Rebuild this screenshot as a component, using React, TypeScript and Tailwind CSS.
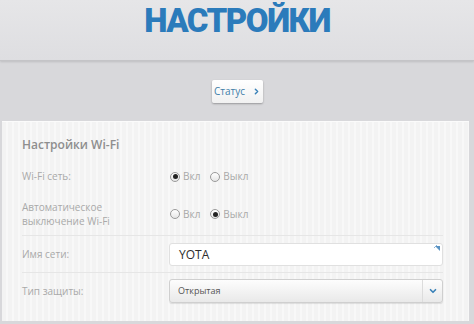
import { ChevronDown, ChevronRight } from "lucide-react";

function Radio({ checked, label }: { checked?: boolean; label: string }) {
  return (
    <label className="flex items-center gap-[3px]">
      <span className="flex h-[10px] w-[10px] items-center justify-center rounded-full border border-[#9a9a9a] bg-[linear-gradient(#ffffff,#e6e6e6)]">
        {checked ? <span className="h-[5px] w-[5px] rounded-full bg-[#222]" /> : null}
      </span>
      <span className="text-[10px] text-[#a8a8a8]">{label}</span>
    </label>
  );
}

export default function App() {
  return (
    <div
      className="h-[324px] w-[474px] overflow-hidden bg-[#d8d8db]"
      style={{ fontFamily: '"Open Sans", "Liberation Sans", sans-serif' }}
    >
      {/* header */}
      <header className="flex h-[61px] justify-center border-b border-[#c4c4c7] bg-[linear-gradient(#e6e6e8,#dedee1)] shadow-[0_1px_2px_rgba(0,0,0,0.12)]">
        <h1
          className="mt-[4px] text-[33px] font-black leading-[34px] tracking-[-1.5px] text-[#2b7bbb]"
          style={{ fontFamily: 'Roboto, "Liberation Sans", sans-serif' }}
        >
          НАСТРОЙКИ
        </h1>
      </header>

      {/* nav */}
      <div className="flex h-[60px] items-center justify-center pl-[1px]">
        <button
          type="button"
          className="mt-[1px] flex h-[23px] w-[51px] items-center justify-center gap-[7px] rounded-[2px] bg-[linear-gradient(#ffffff,#f1f1f1)] text-[10px] text-[#3f7ea8] shadow-[0_1px_2px_rgba(0,0,0,0.3)]"
        >
          Статус
          <ChevronRight className="h-[9px] w-[9px] text-[#3a82b8]" strokeWidth={4} />
        </button>
      </div>

      {/* wifi panel */}
      <section className="ml-[2px] h-[200px] w-[467px] border-t border-[#fbfbfb] bg-[repeating-linear-gradient(90deg,#f3f3f3_0px,#f3f3f3_4px,#f8f8f8_4px,#f8f8f8_6px)] px-[20px] pt-[15px]">
        <h2 className="text-[12px] font-semibold leading-[16px] text-[#8e8e8e]">Настройки Wi-Fi</h2>

        <div className="mt-[16px] flex items-center">
          <span className="w-[148px] text-[10px] text-[#a9a9a9]">Wi-Fi сеть:</span>
          <div className="flex gap-[10px]">
            <Radio checked label="Вкл" />
            <Radio label="Выкл" />
          </div>
        </div>

        <div className="mt-[16px] flex items-center">
          <span className="w-[148px] text-[10px] leading-[14px] text-[#a9a9a9]">
            Автоматическое
            <br />
            выключение Wi-Fi
          </span>
          <div className="flex gap-[10px]">
            <Radio label="Вкл" />
            <Radio checked label="Выкл" />
          </div>
        </div>

        <div className="mt-[7px] mr-[6px] flex items-center border-t border-[#e6e6e6] pt-[7px] pb-[6px]">
          <span className="w-[147px] text-[10px] text-[#a9a9a9]">Имя сети:</span>
          <div className="relative flex h-[23px] w-[274px] items-center rounded-[3px] border border-[#e0e0e0] bg-white pl-[9px] text-[12px] text-[#2d2d2d]">
            YOTA
            <svg className="absolute right-[1px] top-[1px] h-[7px] w-[7px]" viewBox="0 0 7 7">
              <path d="M1 1 L6 1 L6 6 Z" fill="#5a93c3" />
              <path d="M0 3 L3 0" stroke="#8ab4d8" strokeWidth="1" />
            </svg>
          </div>
        </div>

        <div className="mr-[6px] flex items-center border-t border-[#e6e6e6] pt-[6px]">
          <span className="w-[147px] text-[10px] text-[#a9a9a9]">Тип защиты:</span>
          <div className="flex h-[24px] w-[274px] items-center rounded-[3px] border border-[#cfcfcf] bg-[linear-gradient(#fdfdfd,#e9e9e9)] shadow-[0_1px_1px_rgba(0,0,0,0.1)]">
            <span className="flex-1 pl-[8px] text-[9px] text-[#555]">Открытая</span>
            <span className="flex h-full w-[20px] items-center justify-center border-l border-[#dcdcdc]">
              <ChevronDown className="h-[10px] w-[10px] text-[#3a82b8]" strokeWidth={4} />
            </span>
          </div>
        </div>
      </section>
    </div>
  );
}
